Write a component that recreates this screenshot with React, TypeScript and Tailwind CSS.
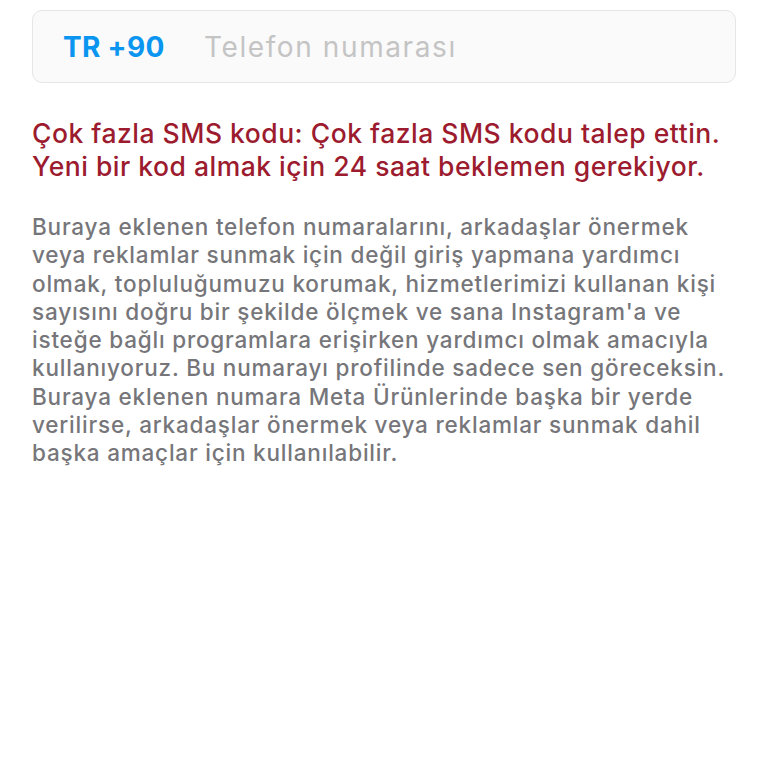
export default function App() {
  const body = [
    "Buraya eklenen telefon numaralarını, arkadaşlar önermek",
    "veya reklamlar sunmak için değil giriş yapmana yardımcı",
    "olmak, topluluğumuzu korumak, hizmetlerimizi kullanan kişi",
    "sayısını doğru bir şekilde ölçmek ve sana Instagram'a ve",
    "isteğe bağlı programlara erişirken yardımcı olmak amacıyla",
    "kullanıyoruz. Bu numarayı profilinde sadece sen göreceksin.",
    "Buraya eklenen numara Meta Ürünlerinde başka bir yerde",
    "verilirse, arkadaşlar önermek veya reklamlar sunmak dahil",
    "başka amaçlar için kullanılabilir.",
  ];
  return (
    <div className="min-h-[768px] w-[768px] bg-white px-8 pt-[10px] font-['Inter',sans-serif]">
      <div className="flex h-[73px] items-center rounded-[10px] border border-[#e6e6e6] bg-[#fafafa] pl-[30px]">
        <span className="w-[141px] text-[28px] font-bold tracking-[0.3px] text-[#0a95f0]">TR +90</span>
        <span className="text-[28px] tracking-[1.6px] text-[#c4c4c4]">Telefon numarası</span>
      </div>
      <div className="mt-[34px] whitespace-nowrap text-[26.5px] font-medium leading-[33px] tracking-[0.5px] text-[#9c1b2e]">
        <div>Çok fazla SMS kodu: Çok fazla SMS kodu talep ettin.</div>
        <div>Yeni bir kod almak için 24 saat beklemen gerekiyor.</div>
      </div>
      <div className="mt-[30px] whitespace-nowrap text-[22.5px] font-medium leading-[28.3px] tracking-[0.8px] text-[#76767a]">
        {body.map((l) => (
          <div key={l}>{l}</div>
        ))}
      </div>
    </div>
  );
}
